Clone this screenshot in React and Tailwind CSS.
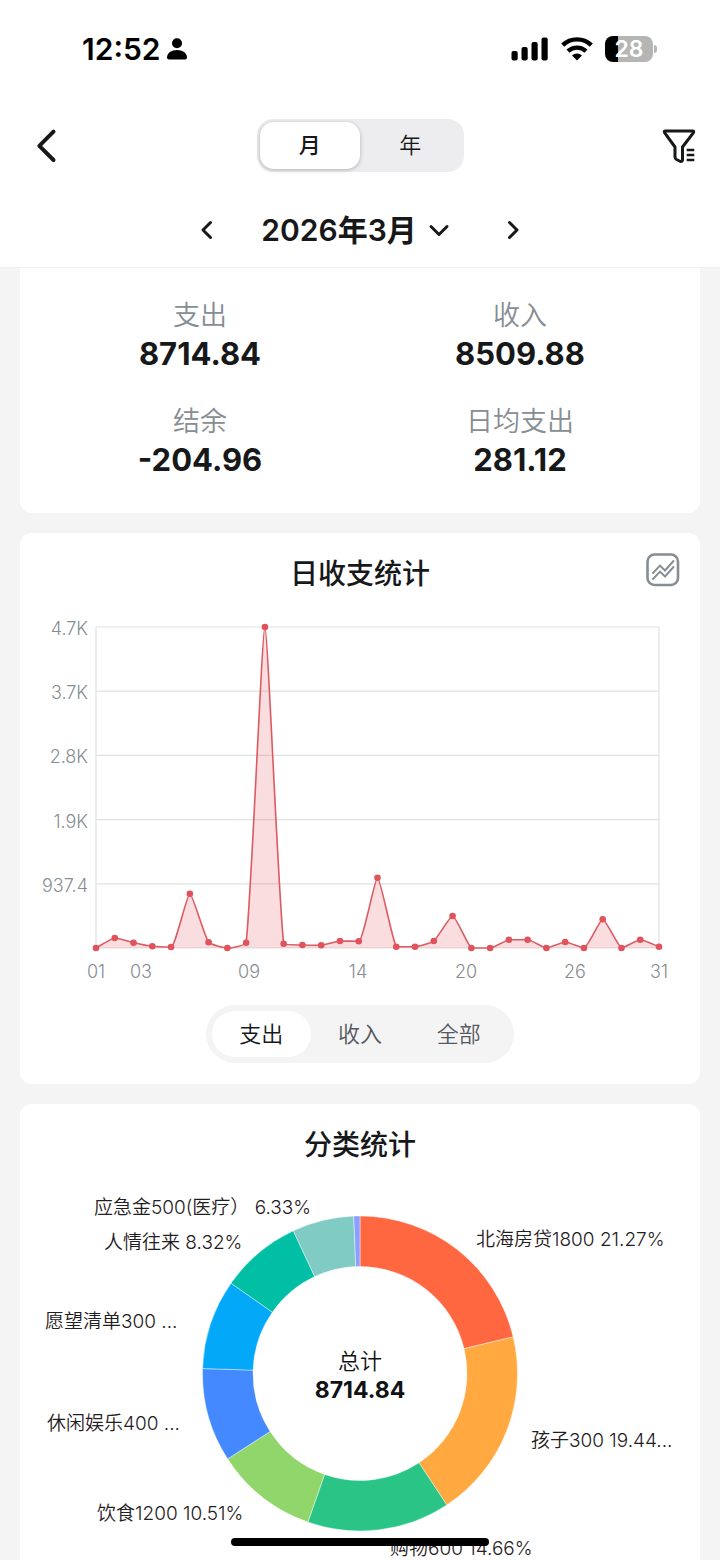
import React, { useState } from 'react'
import clsx from 'clsx'

const SUMMARY = [
  { label: '支出', value: '8714.84' },
  { label: '收入', value: '8509.88' },
  { label: '结余', value: '-204.96' },
  { label: '日均支出', value: '281.12' },
]

const DAILY = [
  0, 146, 77, 25, 15, 793, 83, 0, 77, 4687, 63, 44, 40, 102, 98, 1026,
  19, 19, 102, 467, 0, 0, 121, 121, 0, 88, 0, 419, 0, 121, 19,
]

const Y_LABELS = ['4.7K', '3.7K', '2.8K', '1.9K', '937.4']

const X_LABELS = [
  { text: '01', x: 76 },
  { text: '03', x: 121 },
  { text: '09', x: 229 },
  { text: '14', x: 338 },
  { text: '20', x: 446 },
  { text: '26', x: 555 },
  { text: '31', x: 639 },
]

const CATEGORIES = [
  { percent: 21.27, color: '#ff6740', label: '北海房贷1800 21.27%', x: 456, y: 80 },
  { percent: 19.44, color: '#ffa940', label: '孩子300 19.44...', x: 511, y: 281 },
  { percent: 14.66, color: '#2ac486', label: '购物600 14.66%', x: 370, y: 389 },
  { percent: 10.51, color: '#91d66b', label: '饮食1200 10.51%', x: 77, y: 354 },
  { percent: 9.62, color: '#4489ff', label: '休闲娱乐400 ...', x: 27, y: 264 },
  { percent: 9.22, color: '#03a9f8', label: '愿望清单300 ...', x: 25, y: 162 },
  { percent: 8.32, color: '#00bfa5', label: '人情往来 8.32%', x: 84, y: 83 },
  { percent: 6.33, color: '#80cbc4', label: '应急金500(医疗） 6.33%', x: 74, y: 48 },
  { percent: 0.63, color: '#8c9eff' },
]

const PLOT = { left: 76, right: 639, top: 32, bottom: 353 }

const clamp = (v, a, b) => Math.min(Math.max(v, Math.min(a, b)), Math.max(a, b))

// Smoothed line that never overshoots its neighbouring points
function smoothPath(pts, smooth = 0.15) {
  const handles = pts.map((p, i) => {
    const prev = pts[i - 1]
    const next = pts[i + 1]
    if (!prev || !next) return { before: p, after: p }
    const dPrev = Math.hypot(p[0] - prev[0], p[1] - prev[1])
    const dNext = Math.hypot(next[0] - p[0], next[1] - p[1])
    const ratio = dNext / (dPrev + dNext)
    const before = [0, 1].map((k) => clamp(p[k] - (next[k] - prev[k]) * smooth * (1 - ratio), prev[k], p[k]))
    const after = [0, 1].map((k) => clamp(p[k] + ((p[k] - before[k]) * dNext) / dPrev, next[k], p[k]))
    return { before, after }
  })
  return pts.slice(1).reduce(
    (d, p, i) => `${d} C${handles[i].after.join(' ')} ${handles[i + 1].before.join(' ')} ${p.join(' ')}`,
    `M${pts[0].join(' ')}`
  )
}

function arcPath(cx, cy, outer, inner, from, to) {
  const at = (r, t) => {
    const a = t * 2 * Math.PI - Math.PI / 2
    return `${cx + r * Math.cos(a)} ${cy + r * Math.sin(a)}`
  }
  return `M${at(outer, from)} A${outer} ${outer} 0 0 1 ${at(outer, to)} L${at(inner, to)} A${inner} ${inner} 0 0 0 ${at(inner, from)} Z`
}

function Chevron({ d, className, width = 3 }) {
  return (
    <svg viewBox="0 0 24 24" className={className} fill="none" stroke="currentColor" strokeWidth={width} strokeLinecap="round" strokeLinejoin="round" aria-hidden="true">
      <path d={d} />
    </svg>
  )
}

function StatusBar() {
  return (
    <div className="flex h-[97px] items-center justify-between pl-[82px] pr-[63px] text-black">
      <div className="flex items-center gap-1.5">
        <span className="text-[30px] font-semibold leading-10">12:52</span>
        <svg width="20" height="22" viewBox="0 0 20 22" fill="currentColor" aria-hidden="true">
          <circle cx="10" cy="5.2" r="5" />
          <path d="M0 19.500c0-4.500 4.400-7.500 10-7.500s10 3 10 7.500q0 2-2 2H2q-2 0-2-2Z" />
        </svg>
      </div>
      <div className="flex items-center gap-3">
        <svg width="38" height="24" viewBox="0 0 38 24" fill="currentColor" aria-hidden="true">
          <rect x="0.500" y="14" width="6.200" height="9.500" rx="2" />
          <rect x="10.500" y="10" width="6.200" height="13.500" rx="2" />
          <rect x="20.500" y="5" width="6.200" height="18.500" rx="2" />
          <rect x="30.500" y="0.500" width="6.200" height="23" rx="2" />
        </svg>
        <svg width="32" height="24" viewBox="0 0 32 24" fill="none" stroke="currentColor" strokeWidth="4.400" aria-hidden="true">
          <path d="M1.700 8.200a20.500 20.500 0 0 1 28.600 0" />
          <path d="M7 14.200a13 13 0 0 1 18 0" />
          <path d="M16 23.500l-5-5a7.300 7.300 0 0 1 10 0Z" fill="currentColor" stroke="none" />
        </svg>
        <div className="flex items-center gap-px">
          <div className="flex h-[26px] w-12 items-center justify-center rounded-lg bg-linear-to-r from-black from-28% to-[#b5b5b5] to-28% text-[23px] font-semibold leading-6 text-white">
            28
          </div>
          <div className="h-2 w-[3px] rounded-r-full bg-[#b5b5b5]" />
        </div>
      </div>
    </div>
  )
}

function Header({ period, setPeriod }) {
  return (
    <header className="shrink-0 border-b border-[#f0f0f0] bg-white">
      <StatusBar />
      <nav className="grid h-24 grid-cols-[1fr_auto_1fr] items-center px-6">
        <button type="button" aria-label="返回" className="flex size-11 items-center justify-center justify-self-start">
          <Chevron d="M16.500 4 8 12.500l8.500 8.500" width={2.4} className="size-10" />
        </button>
        <div className="flex h-[53px] w-[207px] rounded-2xl bg-[#ededf0] p-[3px]">
          {['月', '年'].map((item) => (
            <button
              key={item}
              type="button"
              aria-pressed={period === item}
              onClick={() => setPeriod(item)}
              className={clsx(
                'flex-1 rounded-[14px] text-[22px] leading-8',
                period === item ? 'bg-white font-medium shadow-[0_1px_4px_rgba(0,0,0,0.25)]' : 'font-[350]'
              )}
            >
              {item}
            </button>
          ))}
        </div>
        <button type="button" aria-label="筛选" className="justify-self-end">
          <svg width="34" height="36" viewBox="0 0 34 36" fill="none" stroke="currentColor" strokeWidth="3" strokeLinecap="round" strokeLinejoin="round" aria-hidden="true">
            <path d="M3.500 4h27q2 0 .8 1.800L20.500 20v12.500q0 2-2 2l-4-2q-1.500-.8-1.500-2.500V20L2.700 5.800Q1.500 4 3.500 4Z" />
            <path d="M26 23h5M26 28h5M26 33h5" strokeLinecap="square" strokeWidth="2.600" />
          </svg>
        </button>
      </nav>
      <div className="mx-auto flex h-[74px] max-w-[355px] items-center justify-between">
        <button type="button" aria-label="上个月" className="flex size-12 items-center justify-center">
          <Chevron d="M15.500 4.500 8 12l7.500 7.500" className="size-6" />
        </button>
        <button type="button" className="flex items-center gap-2.5 pr-2 text-[30px] font-semibold leading-10">
          2026年3月
          <Chevron d="m4 8.500 8 8 8-8" className="size-6" />
        </button>
        <button type="button" aria-label="下个月" className="flex size-12 items-center justify-center">
          <Chevron d="m8.500 4.500 7.500 7.500-7.500 7.500" className="size-6" />
        </button>
      </div>
    </header>
  )
}

function SummaryCard() {
  return (
    <section className="grid grid-cols-2 gap-y-[30px] rounded-b-xl bg-white px-5 pb-[35px] pt-7 text-center">
      {SUMMARY.map(({ label, value }) => (
        <div key={label}>
          <p className="text-[27px] font-[350] leading-10 text-[#868d93]">{label}</p>
          <p className="text-[31px] font-bold leading-9">{value}</p>
        </div>
      ))}
    </section>
  )
}

function DailyChart() {
  const max = Math.max(...DAILY)
  const height = PLOT.bottom - PLOT.top
  const points = DAILY.map((v, i) => [
    PLOT.left + (i * (PLOT.right - PLOT.left)) / (DAILY.length - 1),
    PLOT.bottom - (v / max) * height,
  ])
  const line = smoothPath(points)

  return (
    <svg viewBox="0 0 680 400" className="block w-full" role="img" aria-label="日收支统计">
      <g stroke="#e0e1e3" strokeWidth="1.200">
        {[0, 1, 2, 3, 4, 5].map((i) => (
          <path key={i} d={`M${PLOT.left} ${PLOT.top + (i * height) / 5}H${PLOT.right}`} />
        ))}
        <path d={`M${PLOT.left} ${PLOT.top}V${PLOT.bottom}M${PLOT.right} ${PLOT.top}V${PLOT.bottom}`} />
      </g>
      <path d={`${line} V${PLOT.bottom} H${PLOT.left} Z`} fill="#e6555f" fillOpacity="0.200" />
      <path d={line} fill="none" stroke="#dc5b62" strokeWidth="1.600" strokeLinejoin="round" />
      {points.map(([x, y], i) => (
        <circle key={i} cx={x} cy={y} r="3.300" fill="#e0535c" />
      ))}
      <g className="fill-[#868d93] text-[18px] font-[350]">
        {Y_LABELS.map((text, i) => (
          <text key={text} x="68" y={PLOT.top + 8 + (i * height) / 5} textAnchor="end">{text}</text>
        ))}
        {X_LABELS.map(({ text, x }) => (
          <text key={text} x={x} y="383" textAnchor="middle">{text}</text>
        ))}
      </g>
    </svg>
  )
}

function DailyCard() {
  const [type, setType] = useState('支出')
  return (
    <section className="rounded-xl bg-white pb-[21px] pt-5">
      <div className="grid grid-cols-[1fr_auto_1fr] items-start px-5">
        <h2 className="col-start-2 text-[28px] font-medium leading-[42px]">日收支统计</h2>
        <button type="button" aria-label="切换图表" className="justify-self-end text-[#868d93]">
          <svg width="34" height="34" viewBox="0 0 34 34" fill="none" stroke="currentColor" strokeLinecap="round" aria-hidden="true">
            <rect x="1.500" y="1.500" width="30.500" height="30.500" rx="7" strokeWidth="2.600" />
            <path d="m7 20 7-7.500 5 5L27.500 8M7 26l7-7.500 5 5 8.500-9.500" strokeWidth="1.900" />
          </svg>
        </button>
      </div>
      <DailyChart />
      <div className="mx-auto mt-2.5 flex h-[58px] max-w-[308px] rounded-full bg-[#f4f4f5] p-1.5">
        {['支出', '收入', '全部'].map((item) => (
          <button
            key={item}
            type="button"
            aria-pressed={type === item}
            onClick={() => setType(item)}
            className={clsx('flex-1 rounded-full text-[22px] font-[350] leading-8', type === item ? 'bg-white' : 'text-[#55585e]')}
          >
            {item}
          </button>
        ))}
      </div>
    </section>
  )
}

function CategoryChart() {
  let start = 0
  return (
    <svg viewBox="0 0 680 440" className="block w-full" role="img" aria-label="分类统计">
      {CATEGORIES.map(({ percent, color }) => {
        const from = start
        start += percent / 100
        return (
          <path key={color} d={arcPath(340, 207.5, 157.5, 107, from, start)} fill={color} stroke="white" strokeOpacity="0.600" strokeWidth="0.700" />
        )
      })}
      <g className="fill-[#1f2023] text-[19px] font-[350]">
        {CATEGORIES.filter((c) => c.label).map(({ label, x, y }) => (
          <text key={label} x={x} y={y}>{label}</text>
        ))}
      </g>
      <g className="fill-[#111214]" textAnchor="middle">
        <text x="340" y="203" className="text-[22px] font-[350]">总计</text>
        <text x="340" y="232" className="text-[23px] font-bold">8714.84</text>
      </g>
    </svg>
  )
}

export default function App() {
  const [period, setPeriod] = useState('月')
  return (
    <div className="flex h-dvh flex-col overflow-hidden bg-[#f4f4f4] font-['Inter','Noto_Sans_CJK_SC',sans-serif] text-[#17181a]">
      <Header period={period} setPeriod={setPeriod} />
      <main className="flex min-h-0 flex-1 flex-col gap-5 overflow-y-auto px-5 [scrollbar-width:none]">
        <SummaryCard />
        <DailyCard />
        <section className="rounded-xl bg-white pt-5">
          <h2 className="text-center text-[28px] font-medium leading-[42px]">分类统计</h2>
          <CategoryChart />
        </section>
      </main>
      {/* Home indicator */}
      <div className="fixed bottom-3.5 left-1/2 h-2 w-[258px] -translate-x-1/2 rounded-full bg-black" />
    </div>
  )
}
